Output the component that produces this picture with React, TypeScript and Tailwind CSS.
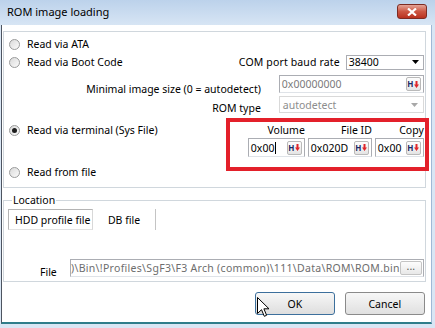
import React from "react";

function Radio({ label, checked = false }: { label: string; checked?: boolean }) {
  return (
    <div className="flex items-center">
      <span className="flex h-[11px] w-[11px] items-center justify-center rounded-full border border-[#9a9b9b] bg-gradient-to-br from-[#dadada] to-[#fbfbfb]">
        {checked && <span className="h-[5px] w-[5px] rounded-full bg-[#1c1c1c]" />}
      </span>
      <span className="ml-[7px]">{label}</span>
    </div>
  );
}

// small "H↓" button that sits inside the hex edit boxes
function HexButton() {
  return (
    <span className="mr-[2px] flex h-[14px] w-[15px] shrink-0 items-center justify-center gap-[1px] rounded-[2px] border border-[#b9b9b9] bg-gradient-to-b from-[#fdfdfd] to-[#e4e4e4]">
      <span className="text-[8px] font-bold leading-none text-[#1b2a66]">H</span>
      <svg width="5" height="7" viewBox="0 0 5 7">
        <path d="M1.5 0h2v3.5H5L2.5 7 0 3.5h1.5z" fill="#e0262b" />
      </svg>
    </span>
  );
}

function HexEdit({ value, caret = false, muted = false, className = "" }: { value: string; caret?: boolean; muted?: boolean; className?: string }) {
  return (
    <div className={`flex items-center border border-[#abadb3] border-b-[#dfe3e8] bg-white ${className}`}>
      <span className={`flex-1 pl-[2px] ${muted ? "text-[#7a7a7a]" : ""}`}>
        {value}
        {caret && <span className="ml-[1px] inline-block h-[12px] w-[1px] translate-y-[2px] bg-black" />}
      </span>
      <HexButton />
    </div>
  );
}

function Arrow({ color }: { color: string }) {
  return (
    <svg width="7" height="4" viewBox="0 0 7 4">
      <path d="M0 0h7L3.5 4z" fill={color} />
    </svg>
  );
}

export default function App() {
  return (
    <div className="relative flex h-[328px] w-[435px] flex-col overflow-hidden bg-[#d9e6f4] font-['Noto_Sans',sans-serif] text-[10.5px] leading-[14px] text-black">
      {/* TITLE BAR */}
      <div className="flex h-[25px] shrink-0 items-start justify-between bg-gradient-to-b from-[#bcd2eb] to-[#d7e5f4] pl-[7px] pr-[8px]">
        <span className="mt-[5px] text-[11px]">ROM image loading</span>
        <span className="mt-[4px] flex h-[15px] w-[30px] items-center justify-center rounded-[3px] border border-[#7d2b22] bg-gradient-to-b from-[#e3a397] via-[#cc5642] to-[#b9301e]">
          <svg width="10" height="8" viewBox="0 0 10 8">
            <path d="M1 0.5l8 7M9 0.5l-8 7" stroke="#fff" strokeWidth="2.2" />
          </svg>
        </span>
      </div>

      <div className="flex flex-1 pb-[4px] pl-[1px] pr-[5px]">
        <div className="flex flex-1 flex-col border-b-2 border-l border-r border-b-[#2f7d8a] border-l-[#4d5460] border-r-[#9fb9d6] bg-white pl-[1px] pr-[5px] pt-[6px]">
          {/* READ MODE GROUP */}
          <div className="flex h-[157px] flex-col border border-[#d0d7dd]">
            <div className="mt-[3px] flex h-[18px] items-center pl-[5px]">
              <Radio label="Read via ATA" />
            </div>

            <div className="flex h-[18px] items-center justify-between pl-[5px] pr-[1px]">
              <Radio label="Read via Boot Code" />
              <div className="flex items-center">
                <span className="tracking-[0.15px]">COM port baud rate</span>
                <div className="ml-[6px] flex h-[15px] w-[78px] items-center justify-between border border-[#abadb3] bg-white pl-[2px] pr-[4px]">
                  <span>38400</span>
                  <Arrow color="#000" />
                </div>
              </div>
            </div>

            <div className="mt-[4px] flex h-[18px] items-start justify-end pr-[1px]">
              <span className="mr-[18px] mt-[7px]">Minimal image size (0 = autodetect)</span>
              <HexEdit value="0x00000000" muted className="h-[18px] w-[145px]" />
            </div>

            <div className="mt-[3px] flex h-[17px] items-start justify-end pr-[1px]">
              <span className="mr-[18px] mt-[5px]">ROM type</span>
              <div className="flex h-[17px] w-[145px] items-center justify-between border border-[#d9d9d9] bg-white pl-[3px] pr-[5px] text-[#8d8d8d]">
                <span>autodetect</span>
                <Arrow color="#a8a8a8" />
              </div>
            </div>

            <div className="mt-[10px] flex justify-between pl-[5px] pr-[1px]">
              <div className="flex h-[14px] items-center">
                <Radio label="Read via terminal (Sys File)" checked />
              </div>
              <div className="flex gap-[3px]">
                <div className="flex w-[57px] flex-col items-end">
                  <span className="h-[14px]">Volume</span>
                  <HexEdit value="0x00" caret className="mt-[1px] h-[19px] w-full" />
                </div>
                <div className="flex w-[64px] flex-col items-end">
                  <span className="h-[14px]">File ID</span>
                  <HexEdit value="0x020D" className="mt-[1px] h-[19px] w-full" />
                </div>
                <div className="flex w-[49px] flex-col items-end">
                  <span className="h-[14px]">Copy</span>
                  <HexEdit value="0x00" className="mt-[1px] h-[19px] w-full" />
                </div>
              </div>
            </div>

            <div className="mt-[6px] flex h-[18px] items-center pl-[5px]">
              <Radio label="Read from file" />
            </div>
          </div>

          {/* LOCATION GROUP */}
          <fieldset className="mt-[5px] border border-[#d0d7dd] pb-[4px]">
            <legend className="ml-[8px] px-[1px]">Location</legend>
            <div className="mt-[2px] flex h-[21px] pl-[4px]">
              <div className="flex w-[85px] items-center border border-[#b4b4b4] border-b-[#e2e2e2] border-r-[#d8d8d8] bg-white pl-[6px]">
                HDD profile file
              </div>
              <div className="flex w-[63px] items-center justify-center border-r border-[#c4c4c4]">DB file</div>
            </div>
            <div className="mt-[29px] flex h-[18px] items-start pl-[36px] pr-[1px]">
              <span className="mt-[6px] w-[30px]">File</span>
              <div className="flex h-[18px] flex-1 items-center overflow-hidden border border-[#abadb3] border-b-[#dfe3e8] bg-white">
                <span className="ml-[0px] flex-1 overflow-hidden whitespace-nowrap tracking-[0.3px] text-[#6d6d6d]">
                  {")\\Bin\\!Profiles\\SgF3\\F3 Arch (common)\\111\\Data\\ROM\\ROM.bin"}
                </span>
                <span className="mr-[1px] flex h-[14px] w-[22px] shrink-0 items-center justify-center rounded-[2px] border border-[#c4c4c4] bg-gradient-to-b from-[#fdfdfd] to-[#e8e8e8] pb-[4px] text-[#555]">
                  ...
                </span>
              </div>
            </div>
          </fieldset>

          {/* BUTTONS */}
          <div className="mt-[10px] flex justify-end gap-[10px] pr-[1px]">
            <button className="flex h-[23px] w-[80px] items-center justify-center rounded-[3px] border border-[#3c6f9c] bg-gradient-to-b from-[#f7f7f7] to-[#dedede]">
              OK
            </button>
            <button className="flex h-[23px] w-[80px] items-center justify-center rounded-[3px] border border-[#8a8a8a] bg-gradient-to-b from-[#f7f7f7] to-[#e0e0e0]">
              Cancel
            </button>
          </div>
        </div>
      </div>

      {/* RED ANNOTATION BOX */}
      <div className="pointer-events-none absolute left-[226px] top-[118px] h-[53px] w-[203px] border-[4px] border-[#e3202a]" />

      {/* MOUSE CURSOR */}
      <svg className="absolute left-[257px] top-[297px]" width="13" height="21" viewBox="0 0 13 21">
        <path d="M0.5 0.5V16.5L4.5 12.7L7.3 19.3L9.6 18.3L6.9 11.8H12Z" fill="#fff" stroke="#000" strokeWidth="1" strokeLinejoin="round" />
      </svg>
    </div>
  );
}
